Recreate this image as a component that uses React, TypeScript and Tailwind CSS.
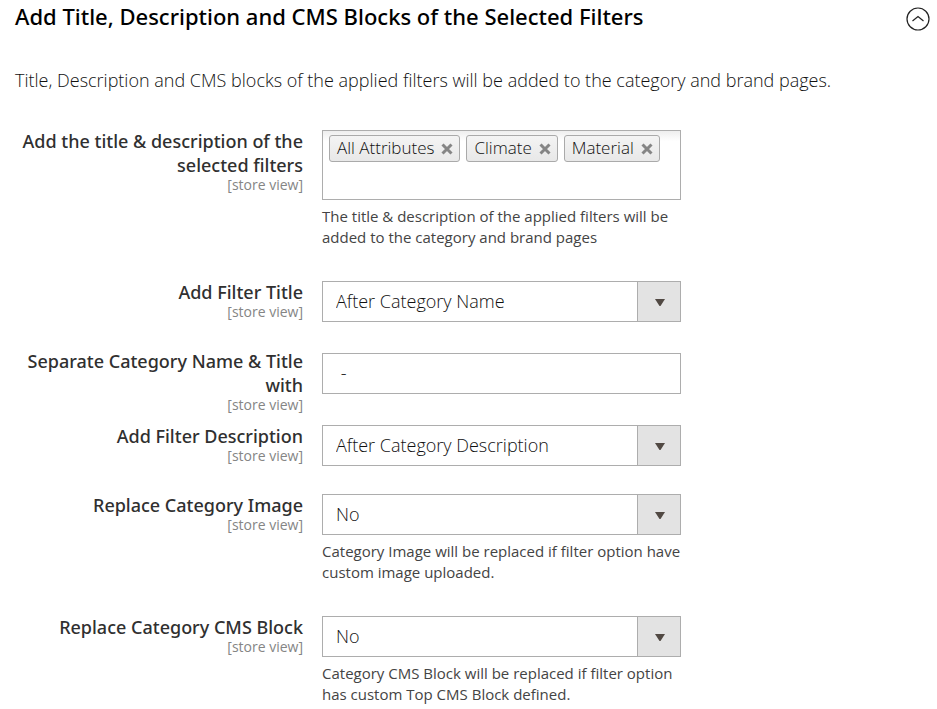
import { useState } from "react";
import type { ReactNode } from "react";

const OPTIONS = ["All Attributes", "Climate", "Material"];

function Field({ id, label, note, className, children }: { id: string; label: string; note?: string; className: string; children: ReactNode }) {
  return (
    <div className={`flex items-start gap-[19px] ${className}`}>
      <label htmlFor={id} className="w-[303px] shrink-0 pl-4 text-right text-[#303030]">
        <span className="block font-['Noto_Sans',sans-serif] text-lg leading-6 font-medium">{label}</span>
        <span className="block text-sm leading-[15px] text-[#858585]">[store view]</span>
      </label>
      <div className="w-[359px] pt-px">
        {children}
        {note && <p className="mt-1.5 text-[15px] leading-[21px] text-[#444]">{note}</p>}
      </div>
    </div>
  );
}

function Select({ id, options }: { id: string; options: string[] }) {
  return (
    <div className="relative">
      <select id={id} className="block h-[41px] w-full appearance-none border border-[#adadad] bg-white pr-12 pb-px pl-[13px] text-lg font-light text-[#111]">
        {options.map((opt) => (
          <option key={opt}>{opt}</option>
        ))}
      </select>
      <span className="pointer-events-none absolute inset-y-0 right-0 flex w-11 items-center justify-center border border-[#adadad] bg-[#e3e3e3] pt-px pl-px">
        <svg width="10" height="7" viewBox="0 0 10 7" fill="#514943">
          <path d="M0 0h10L5.500 7h-1z" />
        </svg>
      </span>
    </div>
  );
}

export default function App() {
  const [open, setOpen] = useState(true);
  const [selected, setSelected] = useState(OPTIONS);

  return (
    <main className="min-h-screen bg-white font-['Open_Sans',sans-serif] text-[#303030]">
      <header className="flex items-end justify-between pt-[3px] pr-[7px] pl-[15px]">
        <h1 className="pb-0.5 font-['Noto_Sans',sans-serif] text-[22px] leading-[26px] font-medium text-black">Add Title, Description and CMS Blocks of the Selected Filters</h1>
        <button type="button" aria-label="Toggle section" aria-expanded={open} onClick={() => setOpen(!open)}>
          <svg className={open ? "" : "rotate-180"} width="24" height="24" viewBox="0 0 24 24" fill="none" stroke="#222" strokeWidth="1.2">
            <circle cx="12" cy="12" r="11" />
            <path d="M6.500 14 12 9.500l5.500 4.500" />
          </svg>
        </button>
      </header>

      {open && (
        <>
          <p className="mt-[35px] px-[15px] text-lg leading-7 font-light text-[#111]">
            Title, Description and CMS blocks of the applied filters will be added to the category and brand pages.
          </p>

          <Field id="filters" label="Add the title & description of the selected filters" note="The title & description of the applied filters will be added to the category and brand pages" className="mt-[35px]">
            <div className="flex h-[70px] flex-wrap content-start gap-1.5 border border-[#adadad] bg-linear-to-b from-[#eee] to-white to-15% px-1.5 py-1">
              {selected.map((name) => (
                <span key={name} className="flex h-[27px] items-center gap-[7px] rounded-[3px] border border-[#aaa] bg-linear-to-b from-[#f4f4f4] to-[#e8e8e8] pr-1.5 pb-px pl-[7px] text-[17px] leading-6 font-light text-[#111]">
                  {name}
                  <button type="button" aria-label={`Remove ${name}`} onClick={() => setSelected(selected.filter((s) => s !== name))}>
                    <svg className="mt-px" width="12" height="12" viewBox="0 0 12 12" stroke="#858585" strokeWidth="3">
                      <path d="m1.500 1.500 9 9m0-9-9 9" />
                    </svg>
                  </button>
                </span>
              ))}
              <input id="filters" type="text" className="h-6 w-24 bg-transparent text-[17px] outline-none" />
            </div>
          </Field>

          <Field id="title" label="Add Filter Title" className="mt-8">
            <Select id="title" options={["After Category Name", "Before Category Name", "No"]} />
          </Field>

          <Field id="separator" label="Separate Category Name & Title with" className="mt-[27px]">
            <input id="separator" type="text" defaultValue=" -" className="mt-[3px] block h-[41px] w-full border border-[#adadad] px-[13px] pb-px text-lg font-light text-[#111]" />
          </Field>

          <Field id="description" label="Add Filter Description" className="mt-3">
            <Select id="description" options={["After Category Description", "Before Category Description", "No"]} />
          </Field>

          <Field id="image" label="Replace Category Image" note="Category Image will be replaced if filter option have custom image uploaded." className="mt-[27px]">
            <Select id="image" options={["No", "Yes"]} />
          </Field>

          <Field id="block" label="Replace Category CMS Block" note="Category CMS Block will be replaced if filter option has custom Top CMS Block defined." className="mt-8">
            <Select id="block" options={["No", "Yes"]} />
          </Field>
        </>
      )}
    </main>
  );
}
